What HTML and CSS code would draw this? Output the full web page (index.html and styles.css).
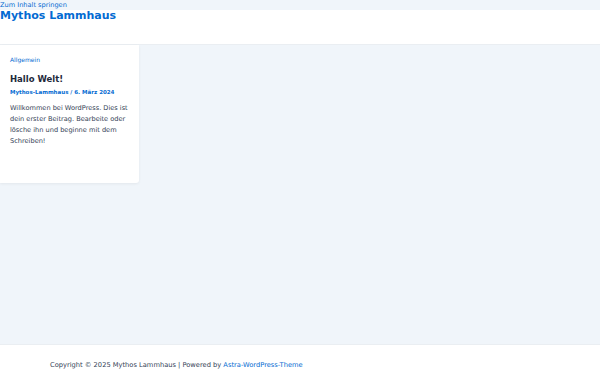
FILE: index.html
```html
<!DOCTYPE html>
<html lang="de">
<head>
  <meta charset="UTF-8">
  <title>Mythos Lammhaus</title>
  <link rel="stylesheet" href="styles.css">
</head>
<body>
  <a class="skip-link" href="#content">Zum Inhalt springen</a>
  <header class="site-header">
    <a class="site-title" href="#">Mythos Lammhaus</a>
  </header>
  <main id="content" class="site-content">
    <article class="post-card">
      <a class="post-cat" href="#">Allgemein</a>
      <h2 class="post-title">Hallo Welt!</h2>
      <div class="post-meta"><a href="#">Mythos-Lammhaus</a> / <a href="#">6. März 2024</a></div>
      <p class="post-excerpt">Willkommen bei WordPress. Dies ist dein erster Beitrag. Bearbeite oder lösche ihn und beginne mit dem Schreiben!</p>
    </article>
  </main>
  <footer class="site-footer">
    <div class="footer-text">Copyright © 2025 Mythos Lammhaus | Powered by <a href="#">Astra-WordPress-Theme</a></div>
  </footer>
</body>
</html>
```

FILE: styles.css
```css
/* Base styles */
*, ::before, ::after {
  box-sizing: border-box;
  margin: 0;
  padding: 0;
}
html, body {
  height: 100%;
}
body {
  background-color: #f0f5fa;
  color: #3a3a3a;
  font-family: 'DejaVu Sans', sans-serif;
  display: flex;
  flex-direction: column;
}
a {
  color: #046bd2;
  text-decoration: none;
}
/* Skip link */
.skip-link {
  display: block;
  height: 10px;
  font-size: 6.6px;
  line-height: 10px;
  color: #046bd2;
}
/* Header */
.site-header {
  background-color: #ffffff;
  height: 35px;
  border-bottom: 1px solid #eaeef2;
}
.site-title {
  display: block;
  font-size: 11px;
  font-weight: 700;
  line-height: 12px;
  color: #046bd2;
}
/* Content */
.site-content {
  flex: 1;
}
.post-card {
  width: 139px;
  height: 138px;
  background-color: #ffffff;
  border-radius: 0 0 3px 0;
  box-shadow: 0 1px 3px rgba(0,0,0,0.06);
  padding: 11px 8px 11px 10px;
}
.post-cat {
  display: block;
  font-size: 6px;
  line-height: 8px;
}
.post-title {
  margin-top: 9px;
  font-size: 8.5px;
  line-height: 12px;
  font-weight: 700;
  color: #1e293b;
}
.post-meta {
  margin-top: 3px;
  font-size: 5.5px;
  line-height: 8px;
  font-weight: 700;
  color: #046bd2;
}
.post-excerpt {
  margin-top: 7px;
  font-size: 6.6px;
  line-height: 11px;
  color: #334155;
}
/* Footer */
.site-footer {
  background-color: #ffffff;
  height: 31px;
  border-top: 1px solid #eaeef2;
  padding: 15px 50px 0;
}
.footer-text {
  font-size: 6.7px;
  line-height: 10px;
  color: #334155;
}
```
